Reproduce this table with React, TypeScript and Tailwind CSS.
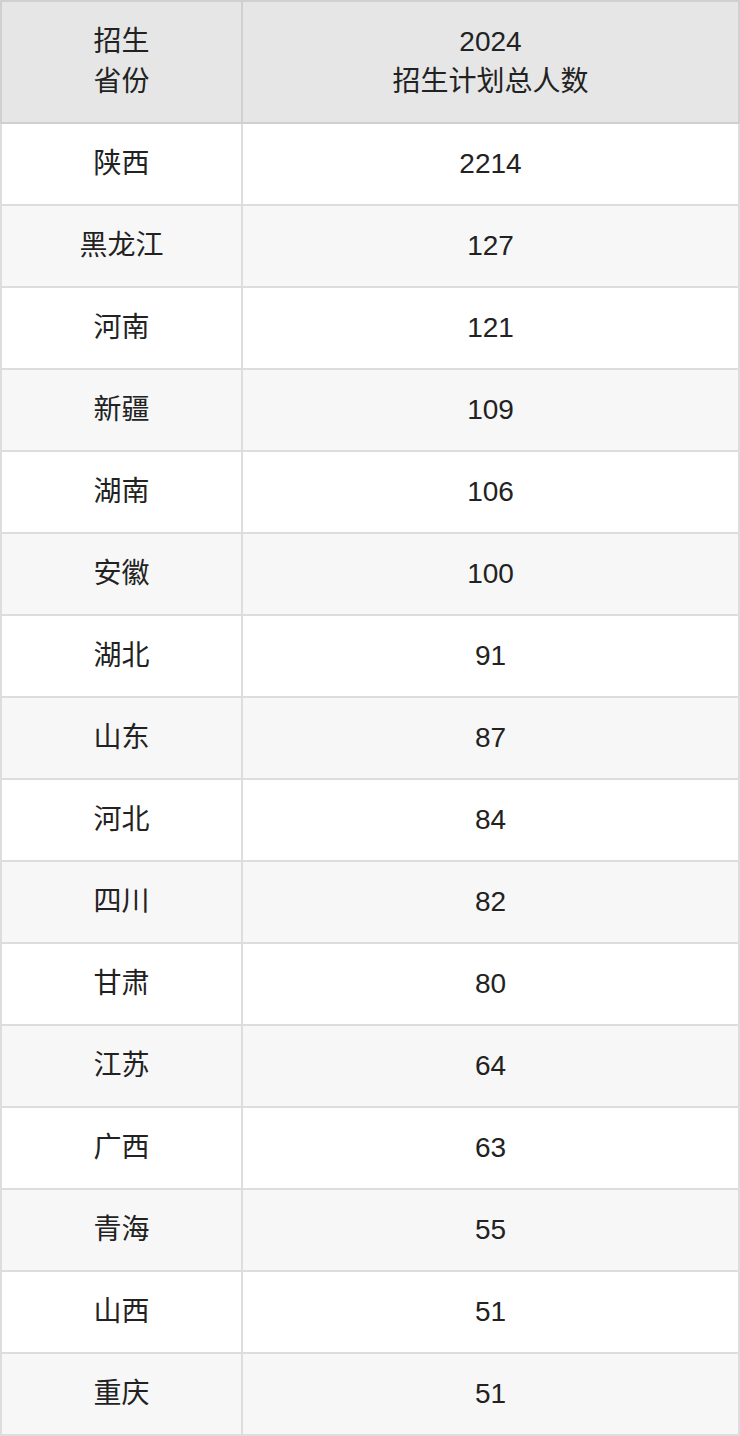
const rows: [string, string][] = [
  ["陕西", "2214"],
  ["黑龙江", "127"],
  ["河南", "121"],
  ["新疆", "109"],
  ["湖南", "106"],
  ["安徽", "100"],
  ["湖北", "91"],
  ["山东", "87"],
  ["河北", "84"],
  ["四川", "82"],
  ["甘肃", "80"],
  ["江苏", "64"],
  ["广西", "63"],
  ["青海", "55"],
  ["山西", "51"],
  ["重庆", "51"],
];

export default function App() {
  return (
    <div
      className="w-[740px] bg-white text-[28px] text-[#222222]"
      style={{ fontFamily: '"Liberation Sans", "Noto Sans CJK SC", sans-serif' }}
    >
      {/* Header */}
      <div className="flex bg-[#e6e6e6] leading-[40px]">
        <div className="flex h-[124px] w-[243px] flex-col items-center justify-center border-2 border-[#d0d0d0] text-center">
          <span>招生</span>
          <span>省份</span>
        </div>
        <div className="flex h-[124px] w-[497px] flex-col items-center justify-center border-y-2 border-r-2 border-[#d0d0d0] text-center">
          <span>2024</span>
          <span>招生计划总人数</span>
        </div>
      </div>

      {/* Body */}
      {rows.map(([province, count], i) => (
        <div
          key={province + i}
          className={i % 2 === 1 ? "flex bg-[#f7f7f7]" : "flex bg-white"}
        >
          <div className="flex h-[82px] w-[243px] items-center justify-center border-x-2 border-b-2 border-[#dddddd]">
            {province}
          </div>
          <div className="flex h-[82px] w-[497px] items-center justify-center border-r-2 border-b-2 border-[#dddddd]">
            {count}
          </div>
        </div>
      ))}
    </div>
  );
}
